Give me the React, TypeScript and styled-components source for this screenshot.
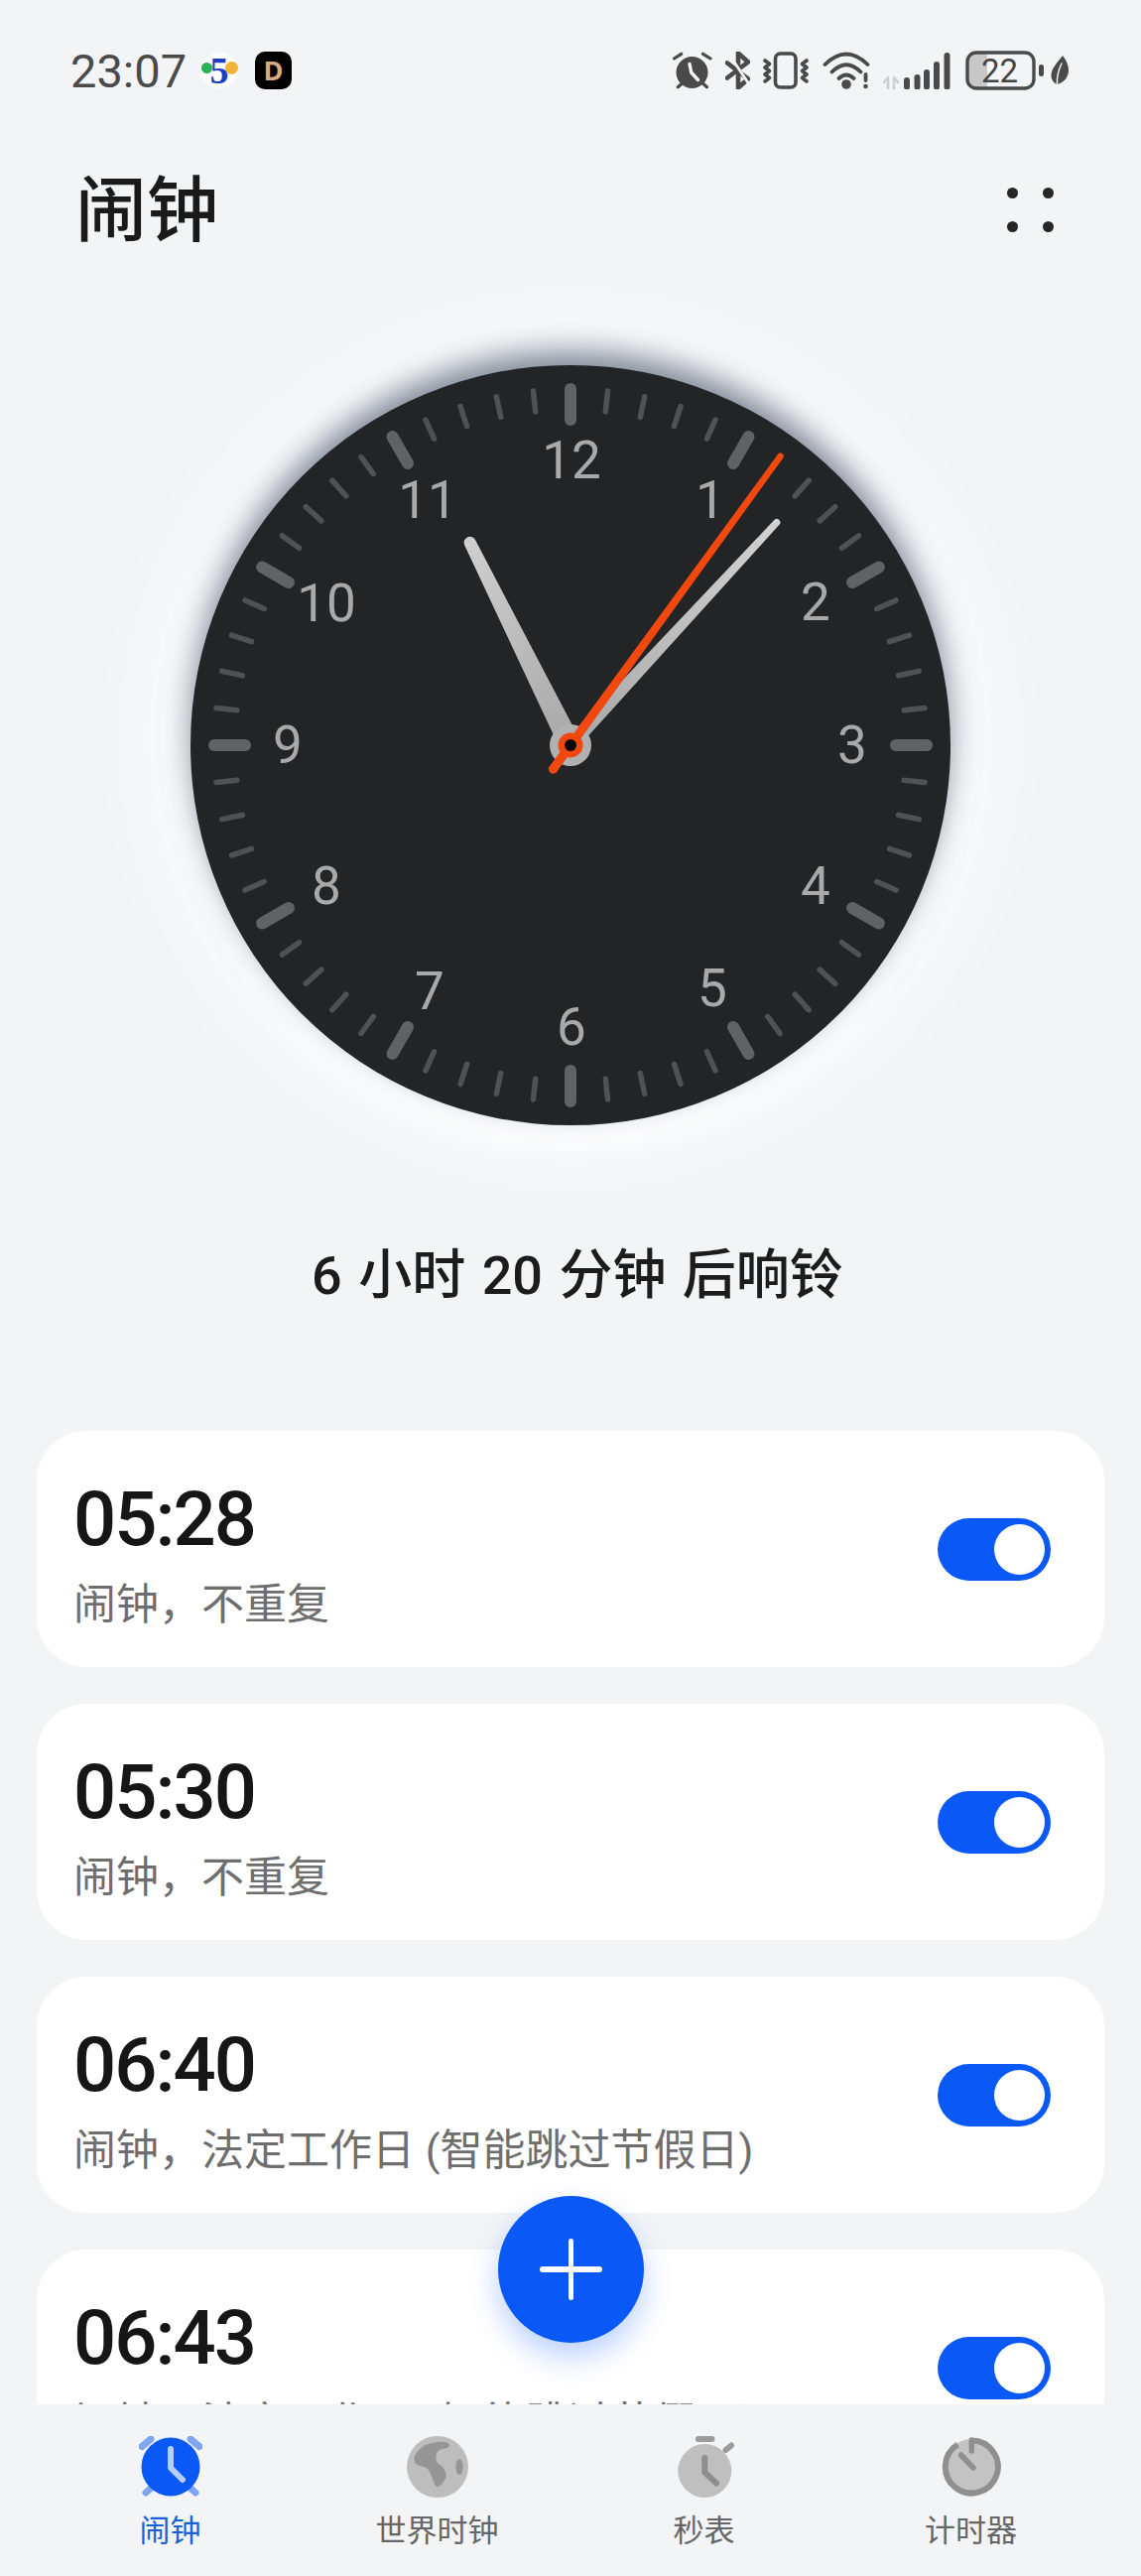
import React from "react";
import styled, { createGlobalStyle } from "styled-components";

const FONT = `Roboto, "Noto Sans CJK SC", sans-serif`;
const BLUE = "#0a59f7";

const Global = createGlobalStyle`
  html, body { margin: 0; padding: 0; background: #f2f4f6; }
  body { font-family: ${FONT}; }
`;

const Page = styled.div`
  position: relative;
  width: 1150px;
  height: 2596px;
  display: flex;
  flex-direction: column;
  overflow: hidden;
  background: #f2f4f6;
`;

const StatusBar = styled.div`
  height: 142px;
  flex: none;
  padding: 0 73px 0 71px;
  display: flex;
  align-items: center;
  justify-content: space-between;
`;
const StatusLeft = styled.div`
  display: flex;
  align-items: center;
`;
const StatusTime = styled.span`
  font-size: 47px;
  line-height: 1;
  color: #4a4a4a;
  width: 131px;
`;
const NewsBadge = styled.div`
  position: relative;
  width: 38px;
  height: 38px;
  border-radius: 50%;
  background: radial-gradient(circle at 50% 50%, #ffffff 55%, #e8ecf1 100%);
  margin-right: 17px;
  display: flex;
  align-items: center;
  justify-content: center;
  font-family: "Liberation Serif", serif;
  font-weight: 700;
  font-size: 38px;
  line-height: 1;
  color: #1b3fc4;
`;
const NewsDot = styled.i<{ $c: string; $x: number; $y: number; $s: number }>`
  position: absolute;
  left: ${(p) => p.$x}px;
  top: ${(p) => p.$y}px;
  width: ${(p) => p.$s}px;
  height: ${(p) => p.$s}px;
  border-radius: 50%;
  background: ${(p) => p.$c};
`;
const DBadge = styled.div`
  width: 37px;
  height: 38px;
  border-radius: 10px;
  background: #000;
  color: #d8ab80;
  font-family: "Open Sans", sans-serif;
  font-weight: 700;
  font-size: 27px;
  line-height: 38px;
  text-align: center;
`;
const StatusRight = styled.div`
  display: flex;
  align-items: center;
  gap: 13px;
`;
const BatteryGroup = styled.div`
  display: flex;
  align-items: center;
  gap: 6px;
`;
const Icon = styled.svg`
  display: block;
  flex: none;
`;

const Header = styled.div`
  height: 142px;
  flex: none;
  padding: 0 88px 0 76px;
  display: flex;
  align-items: center;
  justify-content: space-between;
`;
const Title = styled.h1`
  margin: 0;
  font-size: 72px;
  font-weight: 500;
  line-height: 1;
  color: #1a1a1a;
`;
const MenuDots = styled.div`
  display: grid;
  grid-template-columns: 11px 11px;
  gap: 23px 25px;
  margin-top: -4px;
`;
const MenuDot = styled.span`
  width: 11px;
  height: 11px;
  border-radius: 50%;
  background: #262626;
`;

const DialWrap = styled.div`
  align-self: center;
  margin-top: 84px;
  width: 766px;
  height: 766px;
  flex: none;
  border-radius: 50%;
  background: #232426;
  box-shadow:
    0 -15px 30px -1px rgba(95, 105, 125, 0.8),
    0 18px 28px rgba(255, 255, 255, 0.98),
    0 -6px 90px 40px rgba(255, 255, 255, 0.72);
`;
const Countdown = styled.div`
  margin-top: 110px;
  height: 72px;
  flex: none;
  padding-left: 14px;
  margin-bottom: 3px;
  display: flex;
  align-items: center;
  justify-content: center;
  font-size: 54px;
  font-weight: 500;
  word-spacing: 3px;
  color: #1c1c1c;
`;

const List = styled.div`
  margin-top: 123px;
  flex: 1;
  min-height: 0;
  overflow: hidden;
  padding: 0 37px;
  display: flex;
  flex-direction: column;
  gap: 37px;
`;
const Card = styled.div`
  height: 238px;
  flex: none;
  box-sizing: border-box;
  border-radius: 50px;
  background: #fff;
  padding: 0 54px 0 37px;
  display: flex;
  align-items: center;
  justify-content: space-between;
`;
const CardText = styled.div`
  display: flex;
  flex-direction: column;
  gap: 22px;
  align-self: flex-start;
  padding-top: 50px;
`;
const AlarmTime = styled.div`
  font-size: 76px;
  font-weight: 500;
  line-height: 78px;
  letter-spacing: -2px;
  color: #161616;
`;
const AlarmNote = styled.div`
  font-size: 43px;
  font-weight: 400;
  line-height: 50px;
  color: #6e6e6e;
`;
const Toggle = styled.div`
  width: 114px;
  height: 63px;
  box-sizing: border-box;
  padding: 6px;
  border-radius: 32px;
  background: ${BLUE};
  display: flex;
  justify-content: flex-end;
`;
const Knob = styled.span`
  width: 51px;
  height: 51px;
  border-radius: 50%;
  background: #fff;
`;

const Fab = styled.div`
  position: absolute;
  left: 502px;
  bottom: 235px;
  width: 147px;
  height: 148px;
  border-radius: 50%;
  background: ${BLUE};
  box-shadow: 0 14px 30px rgba(10, 89, 247, 0.28);
  &::before,
  &::after {
    content: "";
    position: absolute;
    background: #fff;
    border-radius: 3px;
  }
  &::before {
    left: 42px;
    top: 71px;
    width: 63px;
    height: 6px;
  }
  &::after {
    left: 71px;
    top: 43px;
    width: 5px;
    height: 62px;
  }
`;

const Nav = styled.nav`
  height: 173px;
  flex: none;
  box-sizing: border-box;
  padding: 32px 37px 0;
  background: #f2f4f6;
  display: grid;
  grid-template-columns: repeat(4, 1fr);
`;
const NavItem = styled.div`
  display: flex;
  flex-direction: column;
  align-items: center;
  gap: 12px;
`;
const NavLabel = styled.span<{ $active?: boolean }>`
  font-size: 31px;
  line-height: 40px;
  color: ${(p) => (p.$active ? "#1a5fd6" : "#666666")};
`;

const ST = "#4a4a4a";

function Dial() {
  const c = 383;
  const ticks = Array.from({ length: 60 }, (_, i) => i);
  const nums: [string, number, number][] = [
    ["12", 576, 463], ["1", 716, 503], ["2", 822, 606], ["3", 859, 750],
    ["4", 822, 892], ["5", 718, 995], ["6", 576, 1034], ["7", 433, 998],
    ["8", 329, 892], ["9", 290, 750], ["10", 329, 607], ["11", 431, 503],
  ];
  const taper = (w0: number, w1: number, len: number, tail = 0) =>
    `M ${-w0} ${tail} L ${-w1} ${-len} A ${w1} ${w1} 0 0 1 ${w1} ${-len} L ${w0} ${tail} Z`;
  return (
    <svg width="766" height="766" viewBox="0 0 766 766" style={{ display: "block" }}>
      <defs>
        <linearGradient id="hg" gradientUnits="userSpaceOnUse" x1="0" y1="-230" x2="0" y2="0">
          <stop offset="0" stopColor="#cfcfcf" />
          <stop offset="1" stopColor="#a8a8a8" />
        </linearGradient>
        <linearGradient id="mg" gradientUnits="userSpaceOnUse" x1="0" y1="-306" x2="0" y2="0">
          <stop offset="0" stopColor="#d2d2d2" />
          <stop offset="1" stopColor="#a8a8a8" />
        </linearGradient>
      </defs>
      {ticks.map((i) => {
        const major = i % 5 === 0;
        return (
          <line
            key={i}
            x1={c}
            x2={c}
            y1={c - 359}
            y2={major ? c - 328 : c - 338}
            stroke={major ? "#616263" : "#505153"}
            strokeWidth={major ? 12 : 5.5}
            strokeLinecap="round"
            transform={`rotate(${i * 6} ${c} ${c})`}
          />
        );
      })}
      {nums.map(([t, x, y]) => (
        <text
          key={t}
          x={x - 192}
          y={y - 368 + 19}
          textAnchor="middle"
          fontFamily="Roboto, sans-serif"
          fontSize="53"
          fill="#a9a9a9"
        >
          {t}
        </text>
      ))}
      <g transform={`translate(${c} ${c})`}>
        <g transform="rotate(333.6)">
          <path d={taper(11, 6, 228)} fill="url(#hg)" />
        </g>
        <g transform="rotate(42.8)">
          <path d={taper(7, 3.5, 306)} fill="url(#mg)" />
        </g>
        <circle r="21" fill="#b1b1b1" />
        <g transform="rotate(36)">
          <path d={taper(4.6, 3.2, 360, 32)} fill="#f0480f" />
          <circle cy="30" r="4.4" fill="#f0480f" />
        </g>
        <circle r="12.5" fill="#f0480f" />
        <circle r="6" fill="#050505" />
      </g>
    </svg>
  );
}

const AlarmStatus = () => (
  <Icon width="40" height="38" viewBox="0 0 40 38" fill="none">
    <circle cx="19.5" cy="21" r="16" fill={ST} />
    <path d="M1.5 7 8.700 2.300M38 7 30.500 2.300M5.300 35.700l5-4.400M34.500 35.700l-5-4.400" stroke={ST} strokeWidth="3.200" strokeLinecap="round" />
    <path d="M17 12.500 18.700 21 25.500 28.500" stroke="#f2f4f6" strokeWidth="3.400" strokeLinecap="round" strokeLinejoin="round" />
  </Icon>
);
const BluetoothStatus = () => (
  <Icon width="25" height="38" viewBox="0 0 25 38" fill="none">
    <path d="M2 11.500 23 27.500 13 36.500V1.500L23 10.500 2 26.500" stroke={ST} strokeWidth="4.600" strokeLinejoin="round" strokeLinecap="round" />
    <path d="M4 3 24 33" stroke="#f2f4f6" strokeWidth="2.800" />
  </Icon>
);
const VibrateStatus = () => (
  <Icon width="47" height="38" viewBox="0 0 47 38" fill="none">
    <rect x="12.500" y="2" width="20.500" height="34" rx="5" stroke={ST} strokeWidth="3.600" />
    <path d="M2 9 6.500 12.500 2 16 6.500 19.500 2 23 6.500 26.500 2 30M44 9 39.500 12.500 44 16 39.500 19.500 44 23 39.500 26.500 44 30" stroke={ST} strokeWidth="3.600" strokeLinecap="round" strokeLinejoin="round" />
  </Icon>
);
const WifiStatus = () => (
  <Icon width="48" height="38" viewBox="0 0 48 38" fill="none">
    <path d="M2.500 13Q24-8 45.500 13M9.500 20.500Q24 6 38.500 20.500M16.500 27Q24 20 31.500 27" stroke={ST} strokeWidth="3.800" strokeLinecap="round" />
    <circle cx="24" cy="33" r="4.800" fill={ST} />
    <path d="M43.500 23v6" stroke={ST} strokeWidth="3.800" strokeLinecap="round" />
    <circle cx="43.500" cy="35" r="2.300" fill={ST} />
  </Icon>
);
const SignalStatus = () => (
  <Icon width="70" height="38" viewBox="0 0 70 38" fill="none">
    <path d="M5 26v11M5 26l-4 5M11 37V26l4 5" stroke="#cfd0d2" strokeWidth="2.600" strokeLinecap="round" strokeLinejoin="round" />
    <g stroke={ST} strokeWidth="6" strokeLinecap="round">
      <path d="M24 29v6.500M34.500 26v9.500M44 21v14.500M54 13v22.500M64.500 4v31.500" />
    </g>
  </Icon>
);
const BatteryStatus = () => (
  <Icon width="80" height="40" viewBox="0 0 80 40" fill="none">
    <path d="M9 3h13v34H9a6 6 0 0 1-6-6V9a6 6 0 0 1 6-6Z" fill="#c8c8c8" />
    <rect x="2" y="2" width="67" height="36" rx="9" stroke={ST} strokeWidth="3.400" />
    <rect x="74" y="14" width="5" height="12" rx="2.500" fill={ST} />
    <text x="34.500" y="32" textAnchor="middle" fontFamily="Roboto, sans-serif" fontSize="33" fill="#444">22</text>
  </Icon>
);
const LeafStatus = () => (
  <Icon width="18" height="32" viewBox="0 0 18 32" fill="none">
    <path d="M12 1C16 6 18 11 18 16c0 7-5 12-11 14C5 30 1 27 .5 22 0 14 7 8 12 1Z" fill={ST} />
    <path d="M6.500 30C6 22 8 15 11 9" stroke="#f2f4f6" strokeWidth="1.500" strokeLinecap="round" />
  </Icon>
);

const TabAlarm = () => (
  <Icon width="64" height="64" viewBox="0 0 64 64" fill="none">
    <path d="M3 10.500 12 3M52 3l9 7.500M7 57l5.500-5M51.500 52l5.500 5" stroke="#7fa5f0" strokeWidth="7" strokeLinecap="round" />
    <circle cx="32" cy="31" r="29.500" fill={BLUE} />
    <path d="M32 13V32L44 44" stroke="#b6cefb" strokeWidth="6" strokeLinecap="round" strokeLinejoin="round" />
  </Icon>
);
const TabGlobe = () => (
  <Icon width="64" height="64" viewBox="0 0 64 64" fill="none">
    <circle cx="32" cy="31" r="31" fill="#bdbdbd" />
    <path d="M9 20C13 13 18 9 23 8 30 5.500 38 5 42 6.700 45 8.500 44 11 41 12 35 13 32 14 31 18 30 22 30 25 33 28 38 31 41 35 40.500 41.500 39 45 35 51 32 51 29 51 28.500 46 27 43 25 38 23 33 20 31.700 16 30 11 30 9.500 27 8.500 24 8 22 9 20Z" fill="#959595" />
    <ellipse cx="54" cy="31" rx="3.600" ry="8" fill="#959595" />
  </Icon>
);
const TabStopwatch = () => (
  <Icon width="64" height="64" viewBox="0 0 64 64" fill="none">
    <rect x="23" y="0" width="19.500" height="6" rx="3" fill="#9b9b9b" />
    <path d="M53.500 14 59 9.500" stroke="#9b9b9b" strokeWidth="6" strokeLinecap="round" />
    <circle cx="32.300" cy="35" r="27" fill="#bfbfbf" />
    <path d="M32.300 22V36.500L44 47.500" stroke="#8e8e8e" strokeWidth="6" strokeLinecap="round" strokeLinejoin="round" />
  </Icon>
);
const TabTimer = () => (
  <Icon width="64" height="64" viewBox="0 0 64 64" fill="none">
    <circle cx="32.300" cy="31" r="28" fill="#c3c3c3" />
    <path d="M32.300 4.500A26.500 26.500 0 1 1 18.300 8.500" stroke="#8f8f8f" strokeWidth="6" />
    <path d="M32.300 4V15M21.500 19 34 32" stroke="#8f8f8f" strokeWidth="5.500" strokeLinecap="round" />
  </Icon>
);

const ALARMS = [
  { time: "05:28", note: "闹钟，不重复" },
  { time: "05:30", note: "闹钟，不重复" },
  { time: "06:40", note: "闹钟，法定工作日 (智能跳过节假日)" },
  { time: "06:43", note: "闹钟，法定工作日 (智能跳过节假日)" },
];

export default function App() {
  return (
    <Page>
      <Global />
      <StatusBar>
        <StatusLeft>
          <StatusTime>23:07</StatusTime>
          <NewsBadge>
            <NewsDot $c="#22b455" $x={1} $y={11} $s={11} />
            <NewsDot $c="#f4b13a" $x={25} $y={10} $s={13} />
            5
          </NewsBadge>
          <DBadge>D</DBadge>
        </StatusLeft>
        <StatusRight>
          <AlarmStatus />
          <BluetoothStatus />
          <VibrateStatus />
          <WifiStatus />
          <SignalStatus />
          <BatteryGroup>
            <BatteryStatus />
            <LeafStatus />
          </BatteryGroup>
        </StatusRight>
      </StatusBar>
      <Header>
        <Title>闹钟</Title>
        <MenuDots>
          <MenuDot />
          <MenuDot />
          <MenuDot />
          <MenuDot />
        </MenuDots>
      </Header>
      <DialWrap>
        <Dial />
      </DialWrap>
      <Countdown>6 小时 20 分钟 后响铃</Countdown>
      <List>
        {ALARMS.map((a) => (
          <Card key={a.time}>
            <CardText>
              <AlarmTime>{a.time}</AlarmTime>
              <AlarmNote>{a.note}</AlarmNote>
            </CardText>
            <Toggle>
              <Knob />
            </Toggle>
          </Card>
        ))}
      </List>
      <Fab />
      <Nav>
        <NavItem>
          <TabAlarm />
          <NavLabel $active>闹钟</NavLabel>
        </NavItem>
        <NavItem>
          <TabGlobe />
          <NavLabel>世界时钟</NavLabel>
        </NavItem>
        <NavItem>
          <TabStopwatch />
          <NavLabel>秒表</NavLabel>
        </NavItem>
        <NavItem>
          <TabTimer />
          <NavLabel>计时器</NavLabel>
        </NavItem>
      </Nav>
    </Page>
  );
}
